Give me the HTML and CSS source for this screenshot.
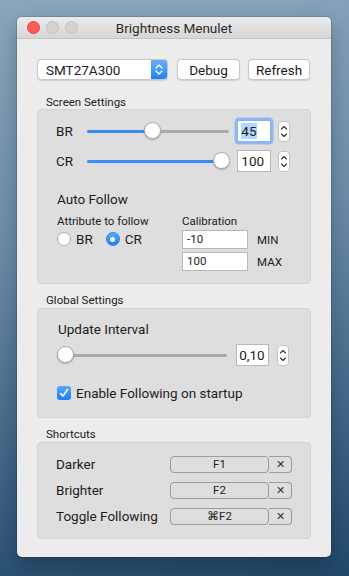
FILE: index.html
```html
<!DOCTYPE html>
<html lang="en">
<head>
  <meta charset="UTF-8">
  <title>Brightness Menulet</title>
  <link rel="stylesheet" href="styles.css">
</head>
<body>

  <div class="window">
    <div class="titlebar">
      <div class="lights">
        <span class="light close"></span>
        <span class="light"></span>
        <span class="light"></span>
      </div>
      <div class="title">Brightness Menulet</div>
    </div>

    <div class="content">
      <div class="toolbar">
        <div class="popup">
          <span class="popup-text">SMT27A300</span>
          <span class="popup-arrows">
            <svg width="8" height="13" viewBox="0 0 8 13"><path d="M1 5 L4 2 L7 5 M1 8 L4 11 L7 8" fill="none" stroke="#fff" stroke-width="1.4" stroke-linecap="round" stroke-linejoin="round"/></svg>
          </span>
        </div>
        <button class="btn debug">Debug</button>
        <button class="btn refresh">Refresh</button>
      </div>

      <div class="group-title first">Screen Settings</div>
      <div class="box box-screen">
        <div class="slider-row">
          <span class="row-label">BR</span>
          <div class="slider">
            <div class="track"><div class="fill" style="width: 47%"></div></div>
            <div class="knob" style="left: calc(8px + (100% - 16px) * 0.45)"></div>
          </div>
          <div class="field focused"><span class="selected">45</span></div>
          <div class="stepper">
            <svg width="8" height="17" viewBox="0 0 8 17"><path d="M1.5 6 L4 3.5 L6.5 6 M1.5 11 L4 13.5 L6.5 11" fill="none" stroke="#333" stroke-width="1.1" stroke-linecap="round" stroke-linejoin="round"/></svg>
          </div>
        </div>
        <div class="slider-row">
          <span class="row-label">CR</span>
          <div class="slider">
            <div class="track"><div class="fill" style="width: 100%"></div></div>
            <div class="knob" style="left: calc(8px + (100% - 16px) * 1)"></div>
          </div>
          <div class="field">100</div>
          <div class="stepper">
            <svg width="8" height="17" viewBox="0 0 8 17"><path d="M1.5 6 L4 3.5 L6.5 6 M1.5 11 L4 13.5 L6.5 11" fill="none" stroke="#333" stroke-width="1.1" stroke-linecap="round" stroke-linejoin="round"/></svg>
          </div>
        </div>

        <div class="sub-title">Auto Follow</div>
        <div class="follow">
          <div class="follow-col">
            <div class="small-label">Attribute to follow</div>
            <div class="radios">
              <label class="radio"><span class="radio-dot"></span>BR</label>
              <label class="radio"><span class="radio-dot on"></span>CR</label>
            </div>
          </div>
          <div class="calib-col">
            <div class="small-label">Calibration</div>
            <div class="calib-row"><div class="calib-field">-10</div><span class="calib-label">MIN</span></div>
            <div class="calib-row"><div class="calib-field">100</div><span class="calib-label">MAX</span></div>
          </div>
        </div>
      </div>

      <div class="group-title">Global Settings</div>
      <div class="box box-global">
        <div class="sub-title">Update Interval</div>
        <div class="slider-row interval">
          <div class="slider">
            <div class="track"></div>
            <div class="knob" style="left: calc(8px + (100% - 16px) * 0)"></div>
          </div>
          <div class="field">0,10</div>
          <div class="stepper">
            <svg width="8" height="17" viewBox="0 0 8 17"><path d="M1.5 6 L4 3.5 L6.5 6 M1.5 11 L4 13.5 L6.5 11" fill="none" stroke="#333" stroke-width="1.1" stroke-linecap="round" stroke-linejoin="round"/></svg>
          </div>
        </div>
        <label class="check">
          <span class="check-box">
            <svg width="10" height="10" viewBox="0 0 10 10"><path d="M1.5 5.5 L4 8 L8.5 1.5" fill="none" stroke="#fff" stroke-width="1.6" stroke-linecap="round" stroke-linejoin="round"/></svg>
          </span>
          Enable Following on startup
        </label>
      </div>

      <div class="group-title">Shortcuts</div>
      <div class="box box-shortcuts">
        <div class="shortcut-row">
          <span class="shortcut-label">Darker</span>
          <div class="shortcut"><span class="key">F1</span><span class="clear">✕</span></div>
        </div>
        <div class="shortcut-row">
          <span class="shortcut-label">Brighter</span>
          <div class="shortcut"><span class="key">F2</span><span class="clear">✕</span></div>
        </div>
        <div class="shortcut-row">
          <span class="shortcut-label">Toggle Following</span>
          <div class="shortcut"><span class="key">⌘F2</span><span class="clear">✕</span></div>
        </div>
      </div>
    </div>
  </div>

</body>
</html>
```

FILE: styles.css
```css
body {
  margin: 0;
  height: 576px;
  overflow: hidden;
  background: linear-gradient(172deg, #8aa6bd 0%, #6a8ca8 40%, #3f6485 75%, #22486a 100%);
  font-family: 'Roboto', 'Liberation Sans', sans-serif;
  color: #1c1c1c;
}

.window {
  margin: 17px 0 0 17px;
  width: 314px;
  height: 540px;
  background: #ececec;
  border-radius: 5px;
  box-shadow: 0 0 0 1px rgba(0,0,0,0.12), 0 8px 20px rgba(0,0,0,0.25);
  overflow: hidden;
}

.titlebar {
  height: 21px;
  background: linear-gradient(#ebebeb, #d6d6d6);
  border-bottom: 1px solid #c4c4c4;
  display: flex;
  align-items: center;
  position: relative;
}

.lights {
  display: flex;
  gap: 6px;
  padding-left: 10px;
}

.light {
  width: 11px;
  height: 11px;
  border-radius: 50%;
  background: #d3d3d3;
  border: 0.5px solid #c2c2c2;
}

.light.close {
  background: #fc5b57;
  border-color: #e0443e;
}

.title {
  position: absolute;
  left: 0;
  right: 0;
  text-align: center;
  font-size: 13.5px;
  color: #2a2a2a;
}

.content {
  padding: 20px 20px 0 20px;
}

.toolbar {
  display: flex;
  height: 21px;
}

.popup {
  width: 131px;
  height: 21px;
  box-sizing: border-box;
  background: #fff;
  border: 1px solid #c6c6c6;
  border-radius: 4px;
  display: flex;
  align-items: center;
  overflow: hidden;
  box-shadow: 0 0.5px 1px rgba(0,0,0,0.12);
}

.popup-text {
  flex: 1;
  font-size: 13.5px;
  padding-left: 8px;
}

.popup-arrows {
  width: 16px;
  height: 21px;
  background: linear-gradient(#69b1fa, #1c80f6);
  display: flex;
  align-items: center;
  justify-content: center;
}

.btn {
  height: 21px;
  background: #fff;
  border: 1px solid #c8c8c8;
  border-radius: 4px;
  font-family: inherit;
  font-size: 13.5px;
  color: #1c1c1c;
  padding: 0;
  box-shadow: 0 0.5px 1px rgba(0,0,0,0.12);
}

.debug {
  width: 63px;
  margin-left: 9px;
}

.refresh {
  width: 62px;
  margin-left: 8px;
}

.group-title {
  font-size: 11.5px;
  line-height: 14px;
  height: 14px;
  padding-left: 9px;
  margin-top: 9px;
  margin-bottom: 1px;
  color: #222;
}

.group-title.first {
  margin-top: 15px;
  margin-bottom: 0;
}

.box {
  background: #dedede;
  border: 1px solid #d3d3d3;
  border-radius: 4px;
}

.box-screen {
  height: 175px;
  box-sizing: border-box;
  padding: 10px 20px 0 18px;
}

.slider-row {
  display: flex;
  align-items: center;
  height: 22px;
  margin-bottom: 8px;
}

.row-label {
  width: 31px;
  font-size: 13.5px;
}

.slider {
  width: 144px;
  height: 18px;
  position: relative;
  display: flex;
  align-items: center;
}

.track {
  flex: 1;
  height: 3px;
  border-radius: 2px;
  background: #aaaaaa;
  overflow: hidden;
}

.fill {
  height: 3px;
  background: #3a8cf5;
}

.knob {
  position: absolute;
  top: 0;
  width: 17px;
  height: 17px;
  box-sizing: border-box;
  margin-left: -8px;
  background: #fff;
  border: 0.5px solid #a9a9a9;
  border-radius: 50%;
  box-shadow: 0 1px 1.5px rgba(0,0,0,0.25);
}

.field {
  width: 34px;
  height: 22px;
  box-sizing: border-box;
  margin-left: 8px;
  background: #fff;
  border: 1px solid #b7b7b7;
  font-size: 13.5px;
  line-height: 20px;
  padding-left: 3px;
}

.field.focused {
  border-color: #8bb2ea;
  box-shadow: 0 0 0 2.5px #8fb8f2;
  border-radius: 2px;
}

.selected {
  background: #b3d6fe;
}

.stepper {
  width: 12px;
  height: 21px;
  box-sizing: border-box;
  margin-left: 7px;
  background: #fff;
  border: 1px solid #c2c2c2;
  border-radius: 4px;
  display: flex;
  align-items: center;
  justify-content: center;
}

.sub-title {
  font-size: 13.5px;
  line-height: 16px;
  margin-top: 19px;
  padding-left: 1px;
}

.follow {
  display: flex;
  margin-top: 7px;
}

.follow-col {
  width: 125px;
  padding-left: 1px;
}

.small-label {
  font-size: 11.5px;
  line-height: 14px;
}

.radios {
  display: flex;
  gap: 13px;
  margin-top: 2px;
}

.radio {
  display: flex;
  align-items: center;
  gap: 5px;
  font-size: 13.5px;
  height: 18px;
}

.radio-dot {
  width: 14px;
  height: 14px;
  box-sizing: border-box;
  border-radius: 50%;
  background: #fff;
  border: 1px solid #b0b0b0;
  display: flex;
  align-items: center;
  justify-content: center;
}

.radio-dot.on {
  background: linear-gradient(#5aa8fb, #1a7ef5);
  border-color: #2d86f0;
}

.radio-dot.on::after {
  content: "";
  width: 5px;
  height: 5px;
  border-radius: 50%;
  background: #fff;
}

.calib-row {
  display: flex;
  align-items: center;
  margin-top: 2px;
  margin-bottom: 3px;
}

.calib-field {
  width: 66px;
  height: 19px;
  box-sizing: border-box;
  background: #fff;
  border: 1px solid #b7b7b7;
  font-size: 11.5px;
  line-height: 17px;
  padding-left: 4px;
}

.calib-label {
  font-size: 11.5px;
  margin-left: 9px;
}

.box-global {
  height: 110px;
  box-sizing: border-box;
  padding: 12px 21px 0 19px;
}

.box-global .sub-title {
  margin-top: 0;
}

.interval {
  margin-top: 7px;
  margin-bottom: 0;
  height: 22px;
}

.interval .slider {
  width: 171px;
}

.interval .field {
  width: 33px;
  margin-left: 9px;
  padding-left: 2px;
}

.interval .stepper {
  margin-left: 8px;
}

.check {
  display: flex;
  align-items: center;
  gap: 5px;
  margin-top: 19px;
  font-size: 13.5px;
  height: 16px;
}

.check-box {
  width: 14px;
  height: 14px;
  border-radius: 3px;
  background: linear-gradient(#5aa8fb, #1a7ef5);
  display: flex;
  align-items: center;
  justify-content: center;
}

.box-shortcuts {
  height: 97px;
  box-sizing: border-box;
  padding: 11px 18px 0 18px;
}

.shortcut-row {
  display: flex;
  align-items: center;
  height: 20px;
  margin-bottom: 6px;
}

.shortcut-label {
  width: 114px;
  font-size: 13.5px;
}

.shortcut {
  display: flex;
  height: 17px;
}

.key {
  width: 99px;
  box-sizing: border-box;
  border: 1px solid #9c9c9c;
  border-radius: 4px;
  text-align: center;
  font-size: 11.5px;
  line-height: 15px;
  color: #222;
}

.clear {
  width: 23px;
  box-sizing: border-box;
  border: 1px solid #9c9c9c;
  border-left: none;
  border-radius: 0 4px 4px 0;
  text-align: center;
  font-size: 11px;
  line-height: 15px;
  color: #333;
}
```
